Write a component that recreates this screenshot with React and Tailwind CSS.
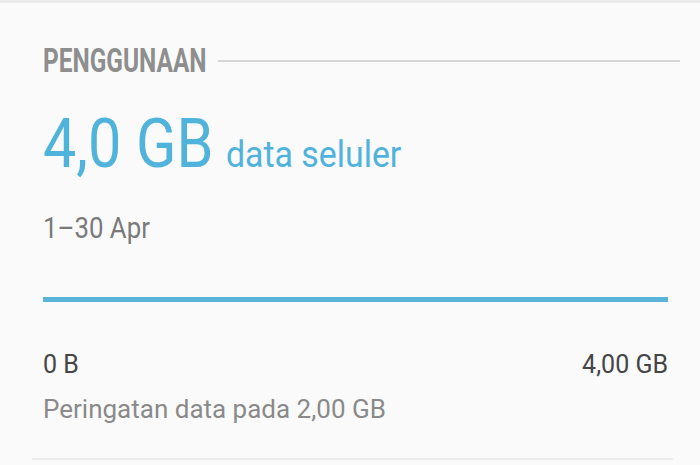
const font = { fontFamily: "Roboto, 'Noto Sans', sans-serif" };

export default function App() {
  return (
    <div className="w-[700px] h-[465px] bg-[#fafafa] overflow-hidden leading-none" style={font}>
      <div className="h-[3px] bg-[#ececec]" />
      <div className="pl-[43px] pr-[32px]">
        {/* section header with rule */}
        <div className="mt-[41px] flex items-center">
          <span className="flex w-[162px] shrink-0 whitespace-nowrap">
            <span className="origin-left scale-x-[0.74] text-[33px] leading-none font-bold text-[#8e8e8e]">PENGGUNAAN</span>
          </span>
          <div className="ml-[13px] flex-1 h-[2px] bg-[#d6d6d6] mr-[-12px]" />
        </div>

        <div className="mt-[32px] flex items-baseline whitespace-nowrap text-[#4fb3dc]">
          <span className="w-[170px] shrink-0 text-[69px] leading-none">
            <span className="inline-block origin-left scale-x-[0.86]">4,0 GB</span>
          </span>
          <span className="ml-[13px] inline-block origin-left scale-x-[0.94] text-[36px] leading-none">data seluler</span>
        </div>

        <div className="mt-[36px] flex whitespace-nowrap">
          <span className="origin-left scale-x-[0.89] text-[29px] leading-none text-[#7a7a7a]">1–30 Apr</span>
        </div>

        {/* usage bar */}
        <div className="mt-[54px] h-[5px] bg-[#5ab4d8]" />

        <div className="mt-[50px] flex justify-between text-[25px] leading-none text-[#454545]">
          <span>0 B</span>
          <span>4,00 GB</span>
        </div>
        <div className="mt-[19px] text-[26px] leading-none text-[#8a8a8a]">Peringatan data pada 2,00 GB</div>
      </div>
      <div className="mt-[36px] ml-[32px] w-[641px] h-[2px] bg-[#ececec]" />
    </div>
  );
}
